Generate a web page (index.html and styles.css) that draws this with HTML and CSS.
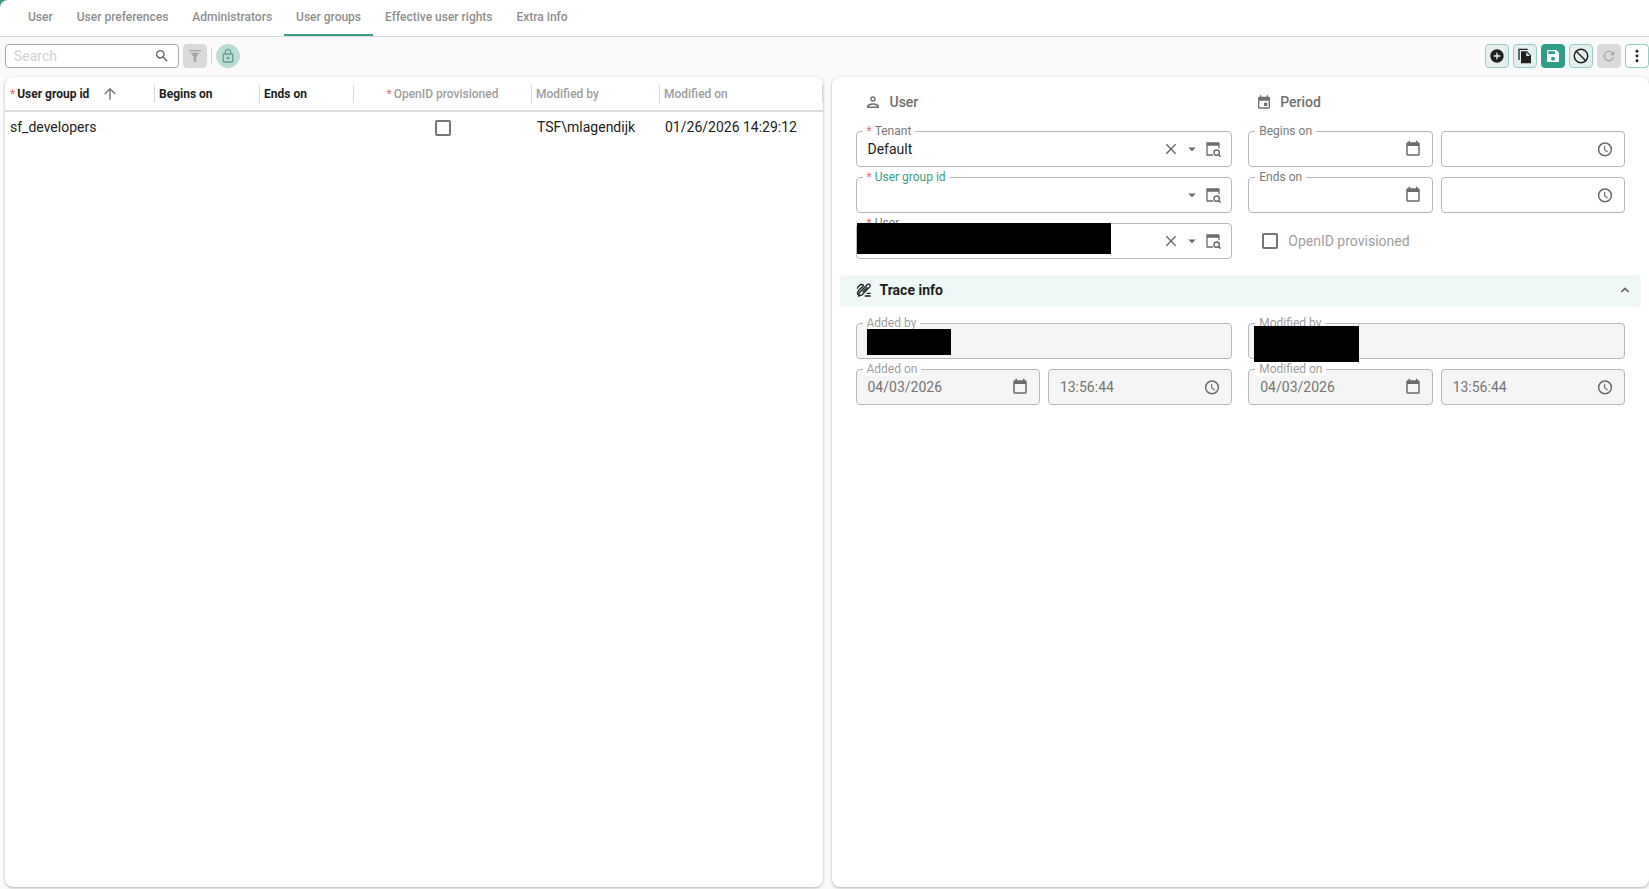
FILE: index.html
```html
<!DOCTYPE html>
<html lang="en">
<head>
    <meta charset="UTF-8">
    <meta name="viewport" content="width=device-width, initial-scale=1.0">
    <title>User groups</title>
    <link rel="stylesheet" href="styles.css">
</head>
<body>
    <!-- shared icons -->
    <svg class="sprite" aria-hidden="true">
        <symbol id="i-clear" viewBox="0 0 24 24"><path d="M5 5l14 14M19 5L5 19" fill="none" stroke="currentColor" stroke-width="2.200"/></symbol>
        <symbol id="i-caret" viewBox="0 0 24 24"><path d="M7 10l5 5 5-5z"/></symbol>
        <symbol id="i-lookup" viewBox="0 0 24 24"><path d="M2 2h18a2 2 0 0 1 2 2v7h-2V7H4v13h8v2H3a1 1 0 0 1-1-1z"/><circle cx="17.500" cy="17.500" r="4" fill="none" stroke="currentColor" stroke-width="2.200"/><path d="M20 20l3.500 3.500" stroke="currentColor" stroke-width="2.200"/></symbol>
        <symbol id="i-calendar" viewBox="0 0 24 24"><path d="M19 19H5V8h14m-3-7v2H8V1H6v2H5c-1.110 0-2 .89-2 2v14a2 2 0 0 0 2 2h14a2 2 0 0 0 2-2V5a2 2 0 0 0-2-2h-1V1"/></symbol>
        <symbol id="i-clock" viewBox="0 0 24 24"><circle cx="12" cy="12.500" r="8.500" fill="none" stroke="currentColor" stroke-width="2"/><path d="M11.500 7.500v5.500l4 3" fill="none" stroke="currentColor" stroke-width="1.500"/></symbol>
    </svg>

    <header class="header">
        <nav class="tabs">
            <a class="tab" href="#">User</a>
            <a class="tab" href="#">User preferences</a>
            <a class="tab" href="#">Administrators</a>
            <a class="tab active" href="#" aria-current="page">User groups</a>
            <a class="tab" href="#">Effective user rights</a>
            <a class="tab" href="#">Extra info</a>
        </nav>
    </header>

    <div class="toolbar">
        <div class="search">
            <input type="text" placeholder="Search" aria-label="Search">
            <svg class="icon small" viewBox="0 0 24 24"><path d="M15.500 14h-.79l-.28-.27A6.471 6.471 0 0 0 16 9.500 6.500 6.500 0 1 0 9.500 16c1.610 0 3.090-.59 4.230-1.570l.27.28v.79l5 4.990L20.490 19l-4.990-5zm-6 0C7.010 14 5 11.990 5 9.500S7.010 5 9.500 5 14 7.010 14 9.500 11.990 14 9.500 14z"/></svg>
        </div>
        <button class="tool off" disabled aria-label="Filter"><svg class="icon small" viewBox="0 0 24 24"><path d="M3 3h18v2H3zM5 7h14l-5 6v8h-4v-8z"/></svg></button>
        <span class="divider"></span>
        <button class="tool lock" aria-label="Lock"><svg class="icon small" viewBox="0 0 24 24"><path d="M18 8h-1V6c0-2.760-2.240-5-5-5S7 3.240 7 6v2H6c-1.100 0-2 .9-2 2v10c0 1.100.9 2 2 2h12c1.100 0 2-.9 2-2V10c0-1.100-.9-2-2-2zM9 6c0-1.660 1.340-3 3-3s3 1.340 3 3v2H9V6zm9 14H6V10h12v10zm-6-3c1.100 0 2-.9 2-2s-.9-2-2-2-2 .9-2 2 .9 2 2 2z"/></svg></button>

        <div class="actions">
            <button class="tool" aria-label="Add"><svg class="icon small" viewBox="0 0 24 24"><path d="M12 2C6.480 2 2 6.480 2 12s4.480 10 10 10 10-4.480 10-10S17.520 2 12 2zm5 11h-4v4h-2v-4H7v-2h4V7h2v4h4v2z"/></svg></button>
            <button class="tool" aria-label="Copy"><svg class="icon small" viewBox="0 0 24 24"><path d="M16 1H2v17h2V3h12V1zm-1 4l6 6v12H6V5h9zm-1 7h5.500L14 6.500V12z"/></svg></button>
            <button class="tool save" aria-label="Save"><svg class="icon small" viewBox="0 0 24 24"><path d="M17 3H5a2 2 0 0 0-2 2v14c0 1.100.89 2 2 2h14c1.100 0 2-.9 2-2V7l-4-4zm-5 16c-1.660 0-3-1.340-3-3s1.340-3 3-3 3 1.340 3 3-1.340 3-3 3zm3-10H5V5h10v4z"/></svg></button>
            <button class="tool" aria-label="Cancel"><svg class="icon" viewBox="0 0 24 24"><path d="M5 5l14 14" stroke="currentColor" stroke-width="2"/><circle cx="12" cy="12" r="9" fill="none" stroke="currentColor" stroke-width="2"/></svg></button>
            <button class="tool off" disabled aria-label="Refresh"><svg class="icon small" viewBox="0 0 24 24"><path d="M17.650 6.350A8 8 0 1 0 19.730 14h-2.080A6 6 0 1 1 12 6c1.660 0 3.140.69 4.220 1.780L13 11h7V4l-2.350 2.350z"/></svg></button>
            <button class="tool plain" aria-label="More"><svg class="icon small" viewBox="0 0 24 24"><circle cx="12" cy="5" r="2.200"/><circle cx="12" cy="12" r="2.200"/><circle cx="12" cy="19" r="2.200"/></svg></button>
        </div>
    </div>

    <main class="content">
        <section class="panel">
            <table class="grid">
                <colgroup>
                    <col class="col-group"><col class="col-begin"><col class="col-end"><col class="col-openid"><col class="col-by"><col>
                </colgroup>
                <thead>
                    <tr>
                        <th><div class="head first"><span class="req">*</span>User group id <svg class="icon sort" viewBox="0 0 24 24"><path d="M12 22V3M3 12l9-9 9 9" fill="none" stroke="currentColor" stroke-width="2.400"/></svg></div></th>
                        <th><div class="head">Begins on</div></th>
                        <th><div class="head">Ends on</div></th>
                        <th><div class="head muted center"><span class="req">*</span>OpenID provisioned</div></th>
                        <th><div class="head muted">Modified by</div></th>
                        <th><div class="head muted">Modified on</div></th>
                    </tr>
                </thead>
                <tbody>
                    <tr>
                        <td>sf_developers</td>
                        <td></td>
                        <td></td>
                        <td class="center"><input type="checkbox" class="check" aria-label="OpenID provisioned"></td>
                        <td>TSF\mlagendijk</td>
                        <td>01/26/2026 14:29:12</td>
                    </tr>
                </tbody>
            </table>
        </section>

        <section class="panel form">
            <div class="columns">
                <div class="column">
                    <h2 class="title"><svg class="icon" viewBox="0 0 24 24"><path d="M4 20v-2.500c0-2.500 4.500-4 8-4s8 1.500 8 4V20zm2-2h12c-.5-1.300-3.500-2.500-6-2.500S6.500 16.700 6 18z"/><circle cx="12" cy="8" r="2.700" fill="none" stroke="currentColor" stroke-width="1.800"/></svg>User</h2>
                    <div class="field">
                        <label for="tenant"><span class="req">*</span>Tenant</label>
                        <input type="text" id="tenant" value="Default">
                        <button aria-label="Clear tenant"><svg class="icon small"><use href="#i-clear"/></svg></button>
                        <button aria-label="Open tenant list"><svg class="icon"><use href="#i-caret"/></svg></button>
                        <button aria-label="Look up tenant"><svg class="icon small"><use href="#i-lookup"/></svg></button>
                    </div>
                    <div class="field">
                        <label for="group" class="focus"><span class="req">*</span>User group id</label>
                        <input type="text" id="group">
                        <button aria-label="Open group list"><svg class="icon"><use href="#i-caret"/></svg></button>
                        <button aria-label="Look up group"><svg class="icon small"><use href="#i-lookup"/></svg></button>
                    </div>
                    <div class="field">
                        <label for="user"><span class="req">*</span>User</label>
                        <input type="text" id="user">
                        <button aria-label="Clear user"><svg class="icon small"><use href="#i-clear"/></svg></button>
                        <button aria-label="Open user list"><svg class="icon"><use href="#i-caret"/></svg></button>
                        <button aria-label="Look up user"><svg class="icon small"><use href="#i-lookup"/></svg></button>
                        <span class="mask mask-user"></span>
                    </div>
                </div>

                <div class="column">
                    <h2 class="title"><svg class="icon small" viewBox="0 0 24 24"><path d="M19 4h-1V2h-2v2H8V2H6v2H5c-1.110 0-2 .9-2 2v14c0 1.100.89 2 2 2h14c1.100 0 2-.9 2-2V6c0-1.100-.9-2-2-2zm0 16H5V10h14v10zM12 13h5v5h-5z"/></svg>Period</h2>
                    <div class="pair">
                        <div class="field">
                            <label for="begin-date">Begins on</label>
                            <input type="text" id="begin-date">
                            <button aria-label="Pick begin date"><svg class="icon"><use href="#i-calendar"/></svg></button>
                        </div>
                        <div class="field">
                            <input type="text" aria-label="Begin time">
                            <button aria-label="Pick begin time"><svg class="icon"><use href="#i-clock"/></svg></button>
                        </div>
                    </div>
                    <div class="pair">
                        <div class="field">
                            <label for="end-date">Ends on</label>
                            <input type="text" id="end-date">
                            <button aria-label="Pick end date"><svg class="icon"><use href="#i-calendar"/></svg></button>
                        </div>
                        <div class="field">
                            <input type="text" aria-label="End time">
                            <button aria-label="Pick end time"><svg class="icon"><use href="#i-clock"/></svg></button>
                        </div>
                    </div>
                    <label class="option"><input type="checkbox" class="check">OpenID provisioned</label>
                </div>
            </div>

            <button class="trace" aria-expanded="true">
                <svg class="icon small" viewBox="0 0 24 24"><path d="M2 10c1-4 5-7 8-6s-1 4-4 6.500S1 17 3 19M13 21h9M16 17h6M4 21l1-5L17.500 3.500c2-1.500 5 1 3.500 3.500L9 19.500zM10 15l7-7" fill="none" stroke="currentColor" stroke-width="2"/></svg>
                Trace info
                <svg class="icon small chevron" viewBox="0 0 24 24"><path d="M6.500 15l5.500-5.500 5.500 5.500" fill="none" stroke="currentColor" stroke-width="2.500"/></svg>
            </button>

            <div class="columns">
                <div class="column">
                    <div class="field readonly">
                        <label for="added-by">Added by</label>
                        <input type="text" id="added-by" readonly>
                        <span class="mask mask-added"></span>
                    </div>
                    <div class="pair">
                        <div class="field readonly">
                            <label for="added-date">Added on</label>
                            <input type="text" id="added-date" value="04/03/2026" readonly>
                            <svg class="icon"><use href="#i-calendar"/></svg>
                        </div>
                        <div class="field readonly">
                            <input type="text" aria-label="Added time" value="13:56:44" readonly>
                            <svg class="icon"><use href="#i-clock"/></svg>
                        </div>
                    </div>
                </div>
                <div class="column">
                    <div class="field readonly">
                        <label for="modified-by">Modified by</label>
                        <input type="text" id="modified-by" readonly>
                        <span class="mask mask-modified"></span>
                    </div>
                    <div class="pair">
                        <div class="field readonly">
                            <label for="modified-date">Modified on</label>
                            <input type="text" id="modified-date" value="04/03/2026" readonly>
                            <svg class="icon"><use href="#i-calendar"/></svg>
                        </div>
                        <div class="field readonly">
                            <input type="text" aria-label="Modified time" value="13:56:44" readonly>
                            <svg class="icon"><use href="#i-clock"/></svg>
                        </div>
                    </div>
                </div>
            </div>
        </section>
    </main>
</body>
</html>
```

FILE: styles.css
```css
* {
    box-sizing: border-box;
}

body {
    margin: 0;
    height: 100vh;
    display: flex;
    flex-direction: column;
    overflow: hidden;
    background-color: #fafafa;
    color: #212121;
    font-family: Roboto, sans-serif;
    font-size: 14px;
    line-height: 20px;
}

button,
input {
    font: inherit;
    color: inherit;
}

button {
    padding: 0;
    border: none;
    background: none;
    cursor: pointer;
}

.sprite {
    display: none;
}

.icon {
    display: block;
    width: 18px;
    height: 18px;
    flex: none;
    fill: currentColor;
}

.icon.small {
    width: 16px;
    height: 16px;
}

.req {
    color: #e57373;
    font-weight: normal;
}

/* tabs */
.header {
    background-color: #3a9e88;
}

.tabs {
    display: flex;
    height: 37px;
    padding-left: 16px;
    background-color: white;
    border-bottom: 1px solid #dcdcdc;
    border-top-left-radius: 8px;
}

.tab {
    padding: 7px 12px;
    height: 36px;
    color: #8e8e8e;
    font-size: 12px;
    font-weight: 500;
    text-decoration: none;
    border-bottom: 2px solid transparent;
}

.tab.active {
    border-bottom-color: #3a9e88;
}

/* toolbar */
.toolbar {
    display: flex;
    align-items: center;
    gap: 4px;
    height: 40px;
    padding: 0 0 2px 5px;
}

.search {
    display: flex;
    align-items: center;
    width: 174px;
    height: 24px;
    padding: 0 8px;
    border: 1px solid #a8a8a8;
    border-radius: 4px;
    background-color: white;
    color: #616161;
}

.search input {
    flex: 1;
    min-width: 0;
    padding: 0;
    border: none;
    outline: none;
    background: none;
}

.search input::placeholder {
    color: #d2d2d2;
}

.tool {
    display: flex;
    align-items: center;
    justify-content: center;
    width: 24px;
    height: 24px;
    border: 1px solid #93d0c2;
    border-radius: 4px;
    background-color: #e5f0ee;
}

.tool.plain {
    background-color: white;
}

.tool.save {
    border-color: #2f9e89;
    background-color: #2f9e89;
    color: white;
}

.tool.off {
    border-color: #dadada;
    background-color: #dadada;
    color: #a6a6a6;
}

.tool.lock {
    border-color: #b7ddd4;
    border-radius: 50%;
    background-color: #b7ddd4;
    color: #71968e;
}

.divider {
    width: 1px;
    height: 18px;
    background-color: #d6d6d6;
}

.actions {
    display: flex;
    gap: 4px;
    margin-left: auto;
}

/* panels */
.content {
    flex: 1;
    display: grid;
    grid-template-columns: 1fr 1fr;
    gap: 9px;
    min-height: 0;
    padding: 0 0 2px 5px;
}

.panel {
    min-width: 0;
    overflow: hidden;
    border-radius: 8px;
    background-color: white;
    box-shadow: 0 1px 3px rgba(0, 0, 0, 0.3);
}

/* table */
.grid {
    width: 100%;
    table-layout: fixed;
    border-collapse: collapse;
}

.col-group {
    width: 150px;
}

.col-begin {
    width: 105px;
}

.col-end {
    width: 94px;
}

.col-openid {
    width: 178px;
}

.col-by {
    width: 128px;
}

.grid th {
    height: 34px;
    padding: 0;
    border-bottom: 2px solid #dcdcdc;
    font-size: 12px;
    font-weight: 700;
    text-align: left;
}

.head {
    display: flex;
    align-items: center;
    gap: 2px;
    height: 18px;
    padding-left: 4px;
    border-right: 1px solid #d8d8d8;
    white-space: nowrap;
}

.head.first {
    padding-left: 5px;
}

.head.muted {
    color: #9e9e9e;
    font-weight: 500;
}

.head.center {
    justify-content: center;
    padding-left: 0;
}

.sort {
    width: 14px;
    height: 14px;
    margin-left: 12px;
    color: #757575;
}

.grid td {
    height: 30px;
    padding: 0 5px;
    white-space: nowrap;
}

.grid td.center {
    text-align: center;
}

.check {
    appearance: none;
    width: 16px;
    height: 16px;
    margin: 0;
    border: 2px solid #757575;
    border-radius: 2px;
    background-color: white;
    vertical-align: middle;
}

/* form */
.form {
    padding: 8px 8px 0;
}

.columns {
    display: grid;
    grid-template-columns: 1fr 1fr;
    gap: 16px;
    padding: 0 16px;
}

.column {
    display: flex;
    flex-direction: column;
    gap: 10px;
    min-width: 0;
}

.pair {
    display: grid;
    grid-template-columns: 1fr 1fr;
    gap: 8px;
}

.title {
    display: flex;
    align-items: center;
    gap: 8px;
    height: 36px;
    margin: 0;
    padding: 0 8px 2px;
    color: #707070;
    font-size: 14px;
    font-weight: 500;
}

.field {
    position: relative;
    display: flex;
    align-items: center;
    gap: 4px;
    min-width: 0;
    height: 36px;
    padding: 0 10px 0 11px;
    border: 1px solid #b8b8b8;
    border-radius: 4px;
    color: #6b6b6b;
}

.field label {
    position: absolute;
    top: -8px;
    left: 6px;
    display: flex;
    gap: 3px;
    padding: 0 4px;
    border-radius: 4px;
    background-color: white;
    color: #7a7a7a;
    font-size: 12px;
    line-height: 14px;
}

.field label.focus {
    color: #3a9e88;
}

.field input {
    flex: 1;
    min-width: 0;
    padding: 0;
    border: none;
    outline: none;
    background: none;
    color: #212121;
}

.field.readonly {
    background-color: #f5f5f5;
}

.field.readonly label {
    color: #9e9e9e;
}

.field.readonly input {
    color: #757575;
}

/* hidden values */
.mask {
    position: absolute;
    background-color: black;
}

.mask-user {
    top: -1px;
    left: 0;
    width: 254px;
    height: 31px;
}

.mask-added {
    top: 5px;
    left: 10px;
    width: 84px;
    height: 26px;
}

.mask-modified {
    top: 2px;
    left: 5px;
    width: 105px;
    height: 36px;
    z-index: 1;
}

.option {
    display: flex;
    align-items: center;
    gap: 10px;
    height: 36px;
    padding-left: 14px;
    color: #9e9e9e;
}

.trace {
    display: flex;
    align-items: center;
    gap: 8px;
    width: 100%;
    height: 32px;
    margin: 16px 0;
    padding: 0 8px 2px 16px;
    border-radius: 4px;
    background-color: #eff8f6;
    font-weight: 700;
    text-align: left;
}

.trace .chevron {
    margin-left: auto;
    color: #616161;
}
```
